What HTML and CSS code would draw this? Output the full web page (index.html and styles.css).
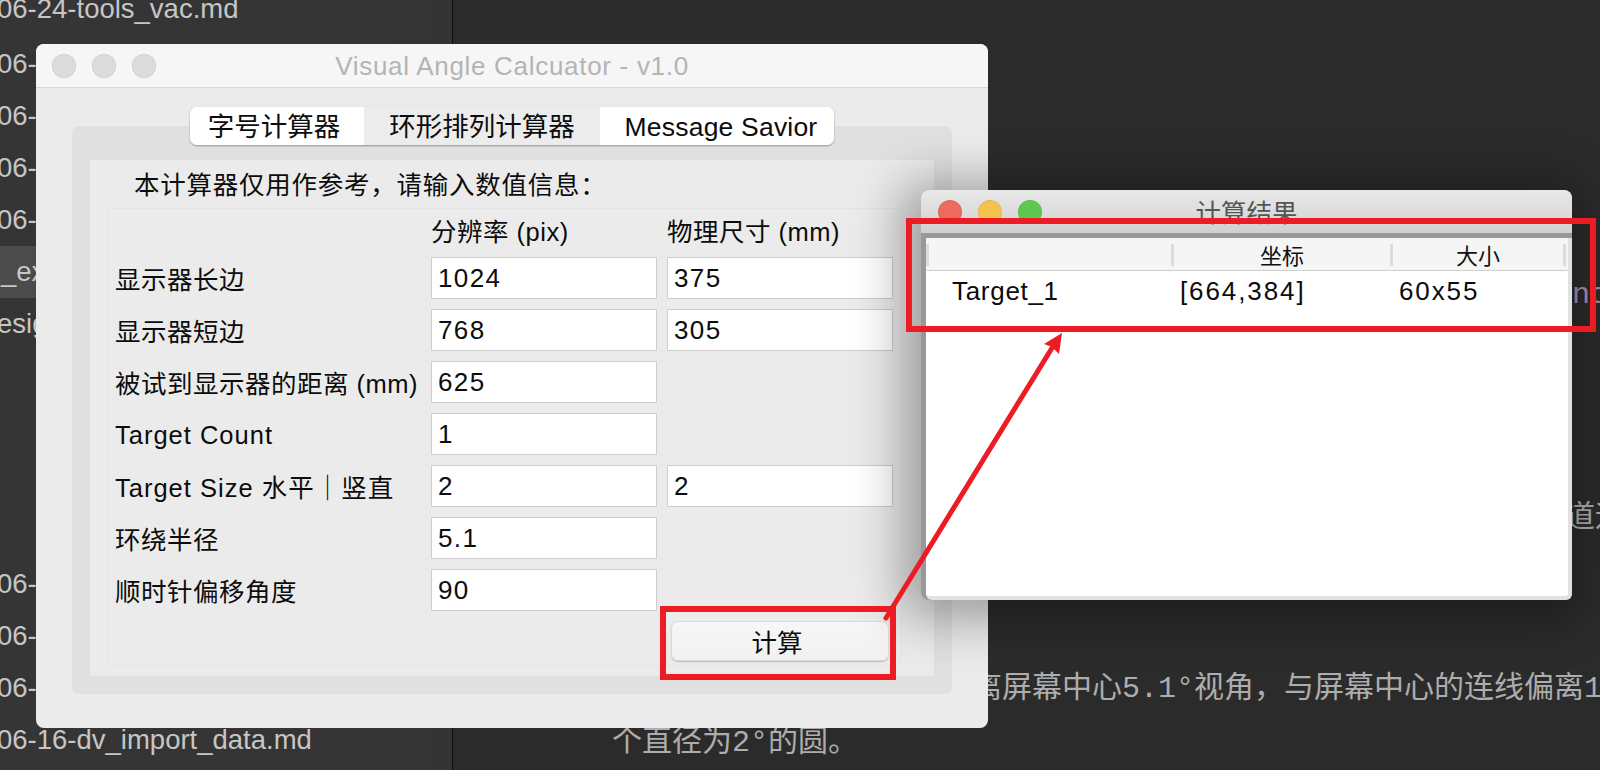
FILE: index.html
```html
<!DOCTYPE html>
<html lang="zh-CN">
<head>
    <meta charset="UTF-8">
    <title>Visual Angle Calcuator - v1.0</title>
    <link rel="stylesheet" href="styles.css">
</head>
<body>
    <div class="desktop">
        <div class="sidebar">
            <div class="file file-first">06-24-tools_vac.md</div>
            <div class="file">06-</div>
            <div class="file">06-</div>
            <div class="file">06-</div>
            <div class="file">06-</div>
            <div class="file file-active">_ex</div>
            <div class="file">esig</div>
            <div class="file file-gap">06-</div>
            <div class="file">06-</div>
            <div class="file">06-</div>
            <div class="file">06-16-dv_import_data.md</div>
        </div>
        <div class="editor">
            <div class="line line-nd">nd</div>
            <div class="line line-dao">道运</div>
            <div class="line line-long">离屏幕中心5.1°视角，与屏幕中心的连线偏离1</div>
            <div class="line line-last">个直径为2°的圆。</div>
        </div>

        <div class="window main-window">
            <div class="titlebar main-titlebar">
                <span class="light light-off"></span>
                <span class="light light-off"></span>
                <span class="light light-off"></span>
                <span class="title main-title">Visual Angle Calcuator - v1.0</span>
            </div>
            <div class="main-body">
                <div class="tabs">
                    <div class="tab tab-first">字号计算器</div>
                    <div class="tab tab-second">环形排列计算器</div>
                    <div class="tab tab-third">Message Savior</div>
                </div>
                <div class="tab-panel">
                    <div class="tab-inner">
                        <div class="intro">本计算器仅用作参考，请输入数值信息：</div>
                        <form class="calc-form">
                            <span></span>
                            <span class="col-head">分辨率 (pix)</span>
                            <span class="col-head">物理尺寸 (mm)</span>

                            <label>显示器长边</label>
                            <input type="text" value="1024">
                            <input type="text" value="375">

                            <label>显示器短边</label>
                            <input type="text" value="768">
                            <input type="text" value="305">

                            <label>被试到显示器的距离 (mm)</label>
                            <input type="text" value="625">
                            <span></span>

                            <label class="label-latin">Target Count</label>
                            <input type="text" value="1">
                            <span></span>

                            <label class="label-mixed">Target Size 水平｜竖直</label>
                            <input type="text" value="2">
                            <input type="text" value="2">

                            <label>环绕半径</label>
                            <input type="text" value="5.1">
                            <span></span>

                            <label>顺时针偏移角度</label>
                            <input type="text" value="90">
                            <span></span>

                            <span></span>
                            <span></span>
                            <button type="button" class="calc-button">计算</button>
                        </form>
                    </div>
                </div>
            </div>
        </div>

        <div class="window result-window">
            <div class="titlebar result-titlebar">
                <span class="light light-red"></span>
                <span class="light light-yellow"></span>
                <span class="light light-green"></span>
                <span class="title result-title">计算结果</span>
            </div>
            <div class="result-body">
                <div class="result-head">
                    <div class="head-cell"></div>
                    <div class="head-cell">坐标</div>
                    <div class="head-cell">大小</div>
                </div>
                <div class="result-row">
                    <div class="row-cell row-name">Target_1</div>
                    <div class="row-cell">[664,384]</div>
                    <div class="row-cell">60x55</div>
                </div>
            </div>
        </div>

        <svg class="marks" width="1600" height="770" viewBox="0 0 1600 770">
            <rect x="909" y="221" width="684" height="108" fill="none" stroke="#ed1c24" stroke-width="6"/>
            <rect x="663" y="609" width="230" height="68" fill="none" stroke="#ed1c24" stroke-width="6"/>
            <path d="M886 618L1052 348" fill="none" stroke="#ed1c24" stroke-width="5" stroke-linecap="round"/>
            <path d="M1062 333L1059 354L1052 347L1044 344Z" fill="#ed1c24"/>
        </svg>
    </div>
</body>
</html>
```

FILE: styles.css
```css
* {
    box-sizing: border-box;
}
html, body {
    margin: 0;
    height: 100%;
}
body {
    font-family: "Liberation Sans", "Noto Sans CJK SC", sans-serif;
    background-color: #2b2b2b;
    overflow: hidden;
}
.desktop {
    position: relative;
    display: flex;
    width: 1600px;
    height: 770px;
    overflow: hidden;
}

/* file list behind the windows */
.sidebar {
    flex: 0 0 453px;
    height: 770px;
    overflow: hidden;
    background: linear-gradient(to right, #353535, #343434);
    border-right: 1px solid #0e0e0e;
    color: #c6c6c6;
    font-size: 27.5px;
}
.file {
    height: 52px;
    line-height: 52px;
    white-space: nowrap;
    text-indent: -3px;
}
.file-first {
    margin-top: -14px;
    line-height: 46px;
}
.file-active {
    background-color: #4b4b4b;
    text-indent: 1px;
}
.file-gap {
    margin-top: 208px;
}

/* editor text behind the windows */
.editor {
    flex: 1;
    min-width: 0;
    display: flex;
    flex-direction: column;
    color: #adadad;
    font-family: "Liberation Mono", "Noto Sans CJK SC", monospace;
    font-size: 30px;
    line-height: 54px;
    white-space: nowrap;
}
.line-nd {
    margin: 268px 0 0 1119px;
    color: #a88fb3;
}
.line-dao {
    margin: 169px 0 0 1112px;
}
.line-long {
    margin: 117px 0 0 519px;
}
.line-last {
    margin-left: 159px;
}

/* windows */
.window {
    position: absolute;
    border-radius: 8px;
}
.titlebar {
    position: relative;
    display: flex;
    align-items: center;
    border-radius: 8px 8px 0 0;
}
.light {
    width: 24px;
    height: 24px;
    margin-right: 16px;
    border-radius: 50%;
    border: 1px solid rgba(0, 0, 0, 0.06);
}
.light-off {
    background-color: #dcdcdc;
}
.light-red {
    background-color: #ee6a5f;
}
.light-yellow {
    background-color: #f6c24f;
}
.light-green {
    background-color: #5ec94e;
}
.title {
    position: absolute;
    left: 0;
    right: 0;
    text-align: center;
}

.main-window {
    left: 36px;
    top: 44px;
    width: 952px;
    height: 684px;
    background-color: #ebebeb;
}
.main-titlebar {
    height: 44px;
    padding-left: 16px;
    background-color: #f6f6f6;
    border-bottom: 1px solid #d8d8d8;
}
.main-title {
    top: 7px;
    color: #b4b4b4;
    font-size: 26px;
    line-height: 30px;
    letter-spacing: 0.7px;
}
.main-body {
    padding: 19px 36px 0;
    display: flex;
    flex-direction: column;
    align-items: center;
}
.tabs {
    display: flex;
    height: 38px;
    margin-bottom: -19px;
    position: relative;
    border-radius: 7px;
    box-shadow: 0 1px 2px rgba(0, 0, 0, 0.35);
    font-size: 26.5px;
    line-height: 40px;
    text-align: center;
    color: #0c0c0c;
}
.tab {
    background-color: #fff;
}
.tab-first {
    width: 174px;
    padding-right: 6px;
    border-radius: 7px 0 0 7px;
}
.tab-second {
    width: 236px;
    background-color: #ececec;
}
.tab-third {
    width: 234px;
    padding-left: 8px;
    border-radius: 0 7px 7px 0;
    letter-spacing: 0.2px;
}
.tab-panel {
    width: 880px;
    height: 568px;
    padding: 34px 18px 18px;
    background-color: #e0e0e0;
    border-radius: 7px;
}
.tab-inner {
    height: 516px;
    background-color: #ebebeb;
}
.intro {
    height: 48px;
    padding-left: 44px;
    font-size: 25.5px;
    line-height: 50px;
    color: #0c0c0c;
    letter-spacing: 0.75px;
}
.calc-form {
    display: grid;
    grid-template-columns: 306px 226px 226px;
    grid-template-rows: 38px repeat(7, 42px) 40px;
    column-gap: 10px;
    row-gap: 10px;
    align-items: center;
    width: 795px;
    height: 458px;
    margin-left: 17px;
    padding-left: 7px;
    border: 1px solid #e4e4e4;
    border-radius: 7px;
    color: #0c0c0c;
    font-size: 25.5px;
    letter-spacing: 0.5px;
}
.col-head {
    align-self: end;
    line-height: 30px;
}
.calc-form label {
    white-space: nowrap;
    margin-bottom: 2px;
}
.calc-form .label-latin {
    margin-bottom: 0;
    margin-top: 2px;
    letter-spacing: 1px;
}
.calc-form .label-mixed {
    letter-spacing: 1px;
}
.calc-form input {
    width: 226px;
    height: 42px;
    padding: 0 6px;
    background-color: #fff;
    border: 1px solid #cdcdcd;
    border-radius: 0;
    outline: none;
    font: inherit;
    font-size: 26px;
    letter-spacing: 1.4px;
    color: #0c0c0c;
}
.calc-button {
    justify-self: center;
    width: 218px;
    height: 40px;
    padding: 0 6px 6px 0;
    background: linear-gradient(#f7f7f7, #f1f1f1);
    border: 1px solid #dadada;
    border-radius: 7px;
    box-shadow: 0 1px 1px rgba(0, 0, 0, 0.2);
    font: inherit;
    color: #0c0c0c;
}

.result-window {
    left: 921px;
    top: 190px;
    width: 651px;
    height: 410px;
    background-color: #999;
    box-shadow: -6px 6px 50px 14px rgba(0, 0, 0, 0.33);
}
.result-titlebar {
    height: 43px;
    padding-left: 17px;
    background: linear-gradient(#e9e9e9, #d0d0d0);
}
.result-title {
    top: 6px;
    color: #555;
    font-size: 25.5px;
    line-height: 34px;
}
.result-body {
    height: 362px;
    margin: 5px 0 0 5px;
    background-color: #fff;
    border-right: 4px solid #e2e2e2;
    border-bottom: 4px solid #e2e2e2;
    border-radius: 0 0 6px 6px;
}
.result-head, .result-row {
    display: grid;
    grid-template-columns: 245px 219px 176px;
}
.result-head {
    height: 33px;
    background-color: #f5f5f5;
    border-bottom: 1px solid #cfcfcf;
    font-size: 22px;
    color: #111;
}
.head-cell {
    height: 22px;
    margin-top: 6px;
    line-height: 26px;
    text-align: center;
    border-left: 3px solid #dcdcdc;
}
.head-cell:last-child {
    border-right: 3px solid #dcdcdc;
}
.result-row {
    height: 40px;
    font-size: 26px;
    line-height: 40px;
    color: #0c0c0c;
}
.row-cell {
    padding-left: 9px;
    letter-spacing: 1.9px;
}
.row-name {
    padding-left: 26px;
    letter-spacing: 0.7px;
}

/* red annotations drawn over the screenshot */
.marks {
    position: absolute;
    left: 0;
    top: 0;
    pointer-events: none;
}
```
